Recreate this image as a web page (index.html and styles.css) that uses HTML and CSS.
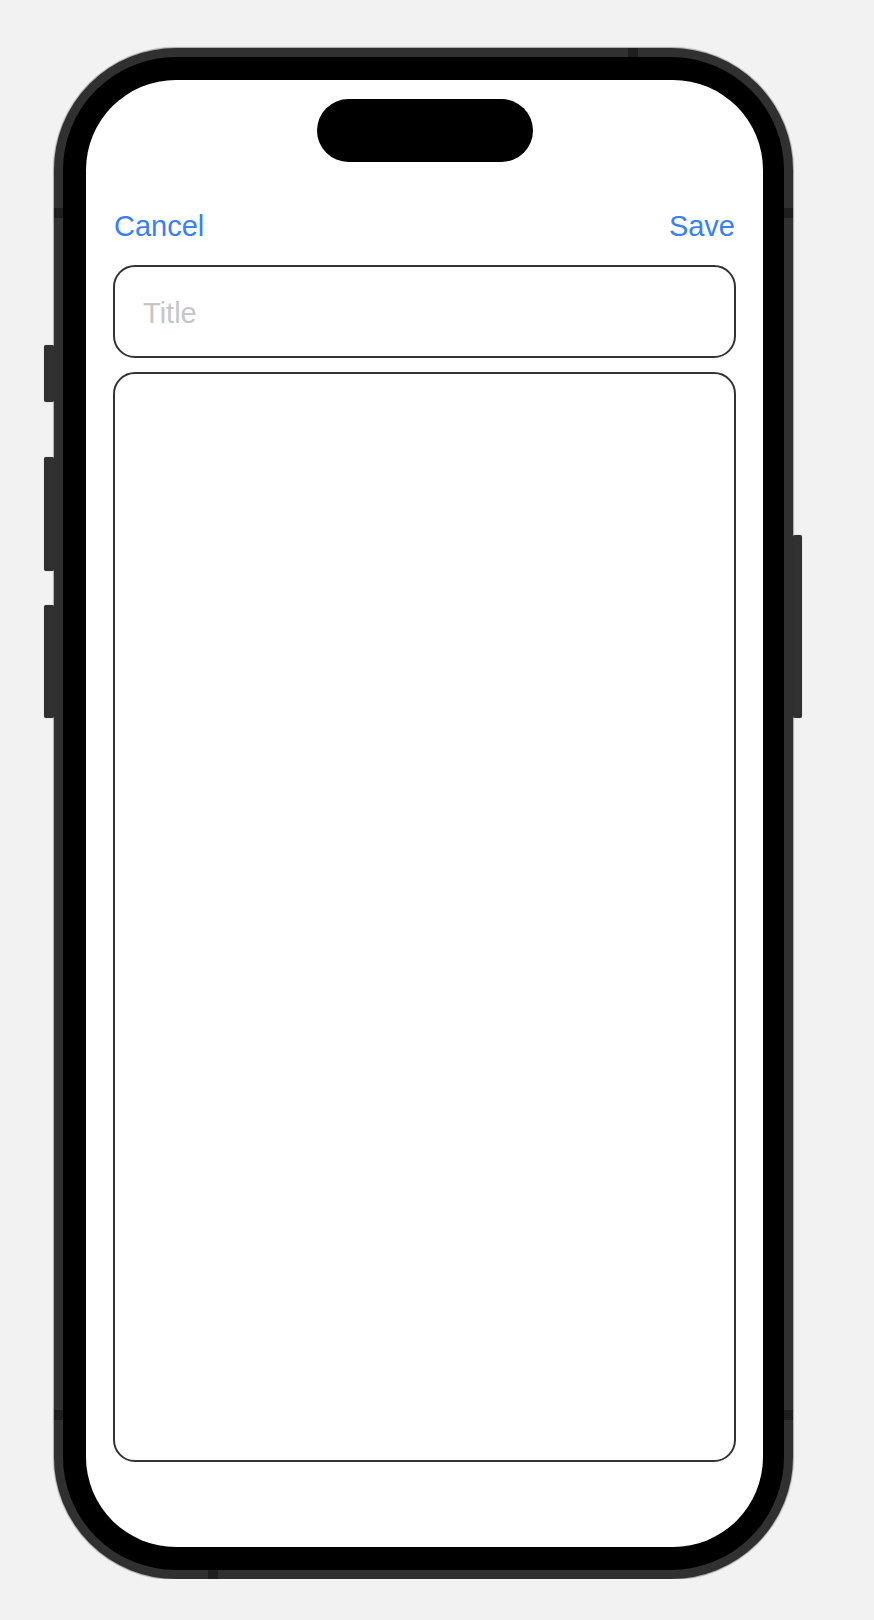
FILE: index.html
```html
<!DOCTYPE html>
<html lang="en">
<head>
    <meta charset="UTF-8">
    <meta name="viewport" content="width=device-width, initial-scale=1.0">
    <title>New Note</title>
    <link rel="stylesheet" href="styles.css">
</head>
<body>
    <div class="stage">
        <div class="device">
            <!-- hardware buttons -->
            <span class="btn btn-action"></span>
            <span class="btn btn-vol-up"></span>
            <span class="btn btn-vol-down"></span>
            <span class="btn btn-power"></span>

            <!-- antenna bands on the rim -->
            <span class="band band-left-top"></span>
            <span class="band band-right-top"></span>
            <span class="band band-left-bottom"></span>
            <span class="band band-right-bottom"></span>
            <span class="band band-top"></span>
            <span class="band band-bottom"></span>

            <div class="frame">
                <div class="screen">
                    <div class="island"></div>

                    <nav class="nav-bar">
                        <a href="#" class="nav-link">Cancel</a>
                        <a href="#" class="nav-link">Save</a>
                    </nav>

                    <form class="note-form">
                        <input type="text" class="note-title" placeholder="Title">
                        <textarea class="note-body"></textarea>
                    </form>
                </div>
            </div>
        </div>
    </div>
</body>
</html>
```

FILE: styles.css
```css
body {
    margin: 0;
    padding: 0;
    background-color: #f2f2f2;
    font-family: "Liberation Sans", Arial, sans-serif;
}
.stage {
    padding: 48px 0 0 54px;
}
.device {
    position: relative;
    width: 739px;
    height: 1531px;
}
.frame {
    box-sizing: border-box;
    width: 100%;
    height: 100%;
    border: 9px solid #303030;
    border-radius: 122px;
    background-color: #000;
    padding: 23px 21px 23px 23px;
    box-shadow: 0 0 1px 1px rgba(0, 0, 0, 0.3);
}
.screen {
    box-sizing: border-box;
    height: 100%;
    background-color: #fff;
    border-radius: 90px;
    overflow: hidden;
    display: flex;
    flex-direction: column;
    padding: 0 27px 85px;
}
.island {
    align-self: center;
    width: 216px;
    height: 63px;
    margin-top: 19px;
    background-color: #000;
    border-radius: 32px;
}
.nav-bar {
    display: flex;
    justify-content: space-between;
    margin-top: 47px;
    padding: 0 1px;
    line-height: 35px;
}
.nav-link {
    color: #3780f6;
    font-size: 29px;
    text-decoration: none;
}
.note-form {
    flex: 1;
    display: flex;
    flex-direction: column;
    gap: 14px;
    margin-top: 21px;
}
.note-title, .note-body {
    box-sizing: border-box;
    width: 100%;
    margin: 0;
    border: 2px solid #333;
    border-radius: 22px;
    background: #fff;
    font-family: "Liberation Sans", Arial, sans-serif;
    font-size: 29px;
    color: #000;
    outline: none;
}
.note-title {
    height: 93px;
    padding: 3px 28px 0;
}
.note-title::placeholder {
    color: #c6c6c8;
}
.note-body {
    flex: 1;
    resize: none;
    padding: 20px 28px;
}

/* side buttons */
.btn {
    position: absolute;
    background-color: #303030;
    border-radius: 2px;
    box-shadow: 0 0 1px rgba(0, 0, 0, 0.4);
}
.btn-action, .btn-vol-up, .btn-vol-down {
    left: -10px;
    width: 10px;
}
.btn-action {
    top: 297px;
    height: 57px;
}
.btn-vol-up {
    top: 409px;
    height: 114px;
}
.btn-vol-down {
    top: 557px;
    height: 113px;
}
.btn-power {
    right: -9px;
    top: 487px;
    width: 9px;
    height: 183px;
}

/* antenna bands */
.band {
    position: absolute;
    background-color: #1e1e1e;
}
.band-left-top, .band-right-top, .band-left-bottom, .band-right-bottom {
    width: 9px;
    height: 10px;
}
.band-left-top, .band-left-bottom {
    left: 0;
}
.band-right-top, .band-right-bottom {
    right: 0;
}
.band-left-top, .band-right-top {
    top: 160px;
}
.band-left-bottom, .band-right-bottom {
    top: 1362px;
}
.band-top, .band-bottom {
    width: 10px;
    height: 9px;
}
.band-top {
    top: 0;
    left: 574px;
}
.band-bottom {
    bottom: 0;
    left: 154px;
}
```
